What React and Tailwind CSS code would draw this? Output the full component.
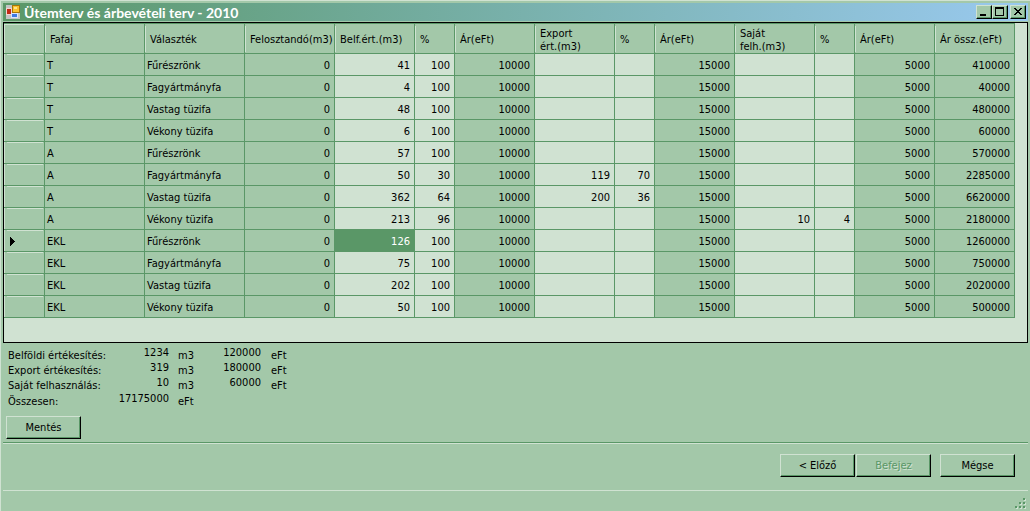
const headers = ['Fafaj', 'Választék', 'Felosztandó(m3)', 'Belf.ért.(m3)', '%', 'Ár(eFt)', 'Export\nért.(m3)', '%', 'Ár(eFt)', 'Saját\nfelh.(m3)', '%', 'Ár(eFt)', 'Ár össz.(eFt)']

const rows = [
  ['T', 'Fűrészrönk', 0, 41, 100, 10000, '', '', 15000, '', '', 5000, 410000],
  ['T', 'Fagyártmányfa', 0, 4, 100, 10000, '', '', 15000, '', '', 5000, 40000],
  ['T', 'Vastag tüzifa', 0, 48, 100, 10000, '', '', 15000, '', '', 5000, 480000],
  ['T', 'Vékony tüzifa', 0, 6, 100, 10000, '', '', 15000, '', '', 5000, 60000],
  ['A', 'Fűrészrönk', 0, 57, 100, 10000, '', '', 15000, '', '', 5000, 570000],
  ['A', 'Fagyártmányfa', 0, 50, 30, 10000, 119, 70, 15000, '', '', 5000, 2285000],
  ['A', 'Vastag tüzifa', 0, 362, 64, 10000, 200, 36, 15000, '', '', 5000, 6620000],
  ['A', 'Vékony tüzifa', 0, 213, 96, 10000, '', '', 15000, 10, 4, 5000, 2180000],
  ['EKL', 'Fűrészrönk', 0, 126, 100, 10000, '', '', 15000, '', '', 5000, 1260000],
  ['EKL', 'Fagyártmányfa', 0, 75, 100, 10000, '', '', 15000, '', '', 5000, 750000],
  ['EKL', 'Vastag tüzifa', 0, 202, 100, 10000, '', '', 15000, '', '', 5000, 2020000],
  ['EKL', 'Vékony tüzifa', 0, 50, 100, 10000, '', '', 15000, '', '', 5000, 500000],
]

const summary = [
  ['Belföldi értékesítés:', '1234', 'm3', '120000', 'eFt'],
  ['Export értékesítés:', '319', 'm3', '180000', 'eFt'],
  ['Saját felhasználás:', '10', 'm3', '60000', 'eFt'],
  ['Összesen:', '17175000', 'eFt', '', ''],
]

const editable = [3, 4, 6, 7, 9, 10]
const current = { row: 8, col: 3 }

function cellColor(row, col) {
  if (row === current.row && col === current.col) return 'bg-[#5a9767] text-white'
  return editable.includes(col) ? 'bg-[#d0e2d2]' : 'bg-[#a3c8a9]'
}

function Button({ children, disabled }) {
  return (
    <button
      disabled={disabled}
      className="h-[23px] w-[75px] border border-t-[#d0e2d2] border-l-[#d0e2d2] border-r-black border-b-black bg-[#a3c8a9] text-center shadow-[inset_-1px_-1px_0_#5a9767] disabled:text-[#5a9767] disabled:[text-shadow:1px_1px_0_#d0e2d2]"
    >
      {children}
    </button>
  )
}

function CaptionButton({ label, children }) {
  return (
    <button
      aria-label={label}
      className="h-[14px] w-4 border border-t-[#d0e2d2] border-l-[#d0e2d2] border-r-black border-b-black bg-[#a3c8a9] shadow-[inset_-1px_-1px_0_#5a9767]"
    >
      <svg width="14" height="12" viewBox="0 0 14 12" shapeRendering="crispEdges">
        {children}
      </svg>
    </button>
  )
}

function TitleBar() {
  return (
    <header className="mb-px flex h-[18px] items-center bg-linear-to-r from-[#5a9767] to-[#99c9ef] pr-[2px] pl-[3px]">
      <svg width="16" height="16" viewBox="0 0 16 16" shapeRendering="crispEdges">
        <rect x="0" y="1" width="14" height="14" fill="#c3c6c4" />
        <rect x="0" y="4" width="6" height="7" fill="#f1d5cf" />
        <rect x="1" y="5" width="4" height="5" fill="#c32a16" />
        <rect x="6" y="1" width="8" height="8" fill="#a87608" />
        <rect x="7" y="2" width="6" height="6" fill="#fbc22c" />
        <rect x="8" y="3" width="3" height="2" fill="#ffe48a" />
        <rect x="5" y="9" width="7" height="5" fill="#d8e3fb" />
        <rect x="6" y="10" width="5" height="3" fill="#3f78e0" />
      </svg>
      <h1 className="ml-[2px] flex-1 pt-[2px] font-['Lato','Open_Sans',sans-serif] text-[14px] leading-[18px] font-bold text-white">
        Ütemterv és árbevételi terv - 2010
      </h1>
      <div className="flex">
        <CaptionButton label="Kis méret">
          <path d="M3 8h6v2H3z" />
        </CaptionButton>
        <CaptionButton label="Teljes méret">
          <path fillRule="evenodd" d="M2 1h9v9H2zM3 3v6h7V3z" />
        </CaptionButton>
        <div className="w-[2px]" />
        <CaptionButton label="Bezárás">
          <path d="M3 2h2v1h1v1h2v-1h1v-1h2v1h-1v1h-1v1h-1v1h1v1h1v1h1v1h-2v-1h-1v-1h-2v1h-1v1h-2v-1h1v-1h1v-1h1v-1h-1v-1h-1v-1h-1z" />
        </CaptionButton>
      </div>
    </header>
  )
}

function PlanTable() {
  return (
    <table className="w-[1011px] table-fixed border-separate border-spacing-0 border-t border-[#5a9767]">
      <colgroup>
        <col className="w-[41px]" />
        <col className="w-[100px]" />
        <col className="w-[100px]" />
        <col className="w-[90px]" />
        <col className="w-[80px]" />
        <col className="w-[40px]" />
        <col className="w-[80px]" />
        <col className="w-[80px]" />
        <col className="w-[40px]" />
        <col className="w-[80px]" />
        <col className="w-[80px]" />
        <col className="w-[40px]" />
        <col className="w-[80px]" />
        <col className="w-[80px]" />
      </colgroup>
      <thead>
        <tr className="h-[30px]">
          <td className="border-r border-b border-[#5a9767] bg-[#a3c8a9] shadow-[inset_1px_1px_0_#d0e2d2]" />
          {headers.map((h, i) => (
            <th key={i} className="border-r border-b border-[#5a9767] bg-[#a3c8a9] p-0 pt-px text-left font-normal">
              <div className="flex h-[26px] items-center border-l border-[#d0e2d2] pt-px pl-1 leading-[13px] whitespace-pre">
                {h}
              </div>
            </th>
          ))}
        </tr>
      </thead>
      <tbody>
        {rows.map((row, r) => (
          <tr key={r} className="h-[22px]">
            <td className="border-r border-b border-[#5a9767] bg-[#a3c8a9] p-0 pr-px pl-[3px] shadow-[inset_1px_0_0_#d0e2d2]">
              <div className="flex h-[21px] items-center border-t border-[#d0e2d2] pl-[3px]">
                {r === current.row && (
                  <svg width="5" height="9" viewBox="0 0 5 9" shapeRendering="crispEdges">
                    <path d="M0 0h1v1h1v1h1v1h1v1h1v1h-1v1h-1v1h-1v1h-1v1h-1z" />
                  </svg>
                )}
              </div>
            </td>
            {row.map((value, c) => (
              <td
                key={c}
                className={`border-r border-b border-[#5a9767] p-0 pt-[2px] ${c < 2 ? 'pl-[2px] text-left' : 'pr-1 text-right'} ${cellColor(r, c)}`}
              >
                {value}
              </td>
            ))}
          </tr>
        ))}
      </tbody>
    </table>
  )
}

export default function App() {
  return (
    <div className="flex min-h-screen flex-col border-t border-l border-[#d0e2d2] bg-[#a3c8a9] pt-[2px] pr-[2px] pl-[2px] font-['DejaVu_Sans_Condensed','Noto_Sans',sans-serif] text-[11px] leading-[13px] text-black">
      <TitleBar />
      <main className="flex flex-1 flex-col">
        <div className="border border-black bg-[#d0e2d2] pb-6">
          <PlanTable />
        </div>

        <div className="mt-[2px] flex flex-col pl-[5px]">
          {summary.map(([label, amount, unit, price, currency]) => (
            <div key={label} className="flex h-[15px] leading-[15px] last:h-4 last:pt-px">
              <span className="w-[100px] pt-[3px]">{label}</span>
              <span className="w-[61px] text-right">{amount}</span>
              <span className="w-9 pt-[3px] pl-[9px]">{unit}</span>
              <span className="w-14 text-right">{price}</span>
              <span className="pt-[3px] pl-[10px]">{currency}</span>
            </div>
          ))}
        </div>

        <div className="mt-[10px] pl-[3px]">
          <Button>Mentés</Button>
        </div>

        <div className="mt-[3px] flex border-t border-[#5a9767] shadow-[inset_0_1px_0_#d0e2d2]">
          <div className="flex flex-1 justify-end pt-[11px] pr-[13px]">
            <Button>{'< Előző'}</Button>
            <div className="ml-px">
              <Button disabled>Befejez</Button>
            </div>
            <div className="ml-[9px]">
              <Button>Mégse</Button>
            </div>
          </div>
        </div>
      </main>
      <footer className="flex h-[21px] items-end justify-end border-t border-[#d0e2d2] pr-px pb-px">
        <svg width="12" height="12" viewBox="0 0 12 12" shapeRendering="crispEdges">
          <path fill="#d0e2d2" d="M9 1h2v2H9zM5 5h2v2H5zM9 5h2v2H9zM1 9h2v2H1zM5 9h2v2H5zM9 9h2v2H9z" />
          <path fill="#5a9767" d="M8 0h2v2H8zM4 4h2v2H4zM8 4h2v2H8zM0 8h2v2H0zM4 8h2v2H4zM8 8h2v2H8z" />
        </svg>
      </footer>
    </div>
  )
}
